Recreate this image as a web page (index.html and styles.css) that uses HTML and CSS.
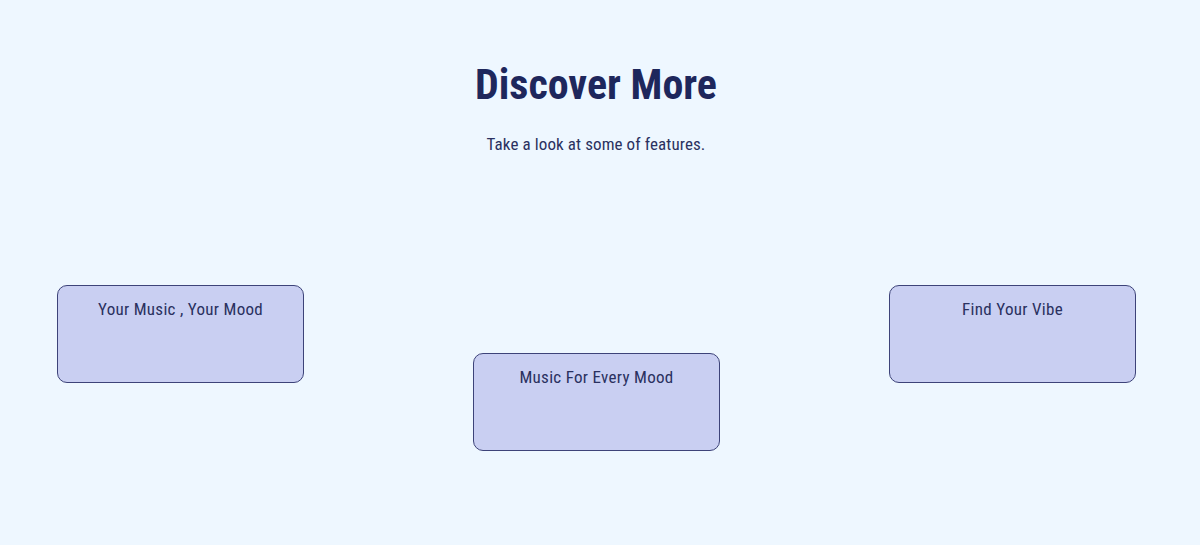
FILE: index.html
```html
<!DOCTYPE html>
<html lang="en">
<head>
<meta charset="utf-8">
<title>Discover More</title>
<link rel="stylesheet" href="styles.css">
</head>
<body>
  <section class="discover">
    <header class="discover-head">
      <h1 class="discover-title">Discover More</h1>
      <p class="discover-sub">Take a look at some of features.</p>
    </header>
    <div class="features">
      <div class="feature-card">Your Music , Your Mood</div>
      <div class="feature-card feature-card--low">Music For Every Mood</div>
      <div class="feature-card">Find Your Vibe</div>
    </div>
  </section>
</body>
</html>
```

FILE: styles.css
```css
html, body {
  margin: 0;
  padding: 0;
  background: #eef7ff;
}

body {
  font-family: "Roboto", "Liberation Sans", sans-serif;
  font-stretch: condensed;
  color: #1f2a5e;
  height: 545px;
  overflow: hidden;
}

.discover {
  width: 1192px;
}

.discover-head {
  display: flex;
  flex-direction: column;
  align-items: center;
  padding-top: 58px;
}

.discover-title {
  margin: 0;
  font-size: 42px;
  font-weight: bold;
  line-height: 54px;
  color: #1e275c;
}

.discover-sub {
  margin: 22px 0 0;
  font-size: 17px;
  line-height: 20px;
  letter-spacing: 0.1px;
  color: #2a3160;
}

.features {
  display: flex;
  align-items: flex-start;
  gap: 169px;
  padding-left: 57px;
  margin-top: 131px;
}

.feature-card {
  box-sizing: border-box;
  width: 247px;
  height: 98px;
  padding-top: 12px;
  text-align: center;
  font-size: 17px;
  line-height: 22px;
  letter-spacing: 0.3px;
  color: #2a3160;
  background: #c9cff2;
  border: 1px solid #3d4379;
  border-radius: 10px;
}

.feature-card--low {
  margin-top: 68px;
}
```
